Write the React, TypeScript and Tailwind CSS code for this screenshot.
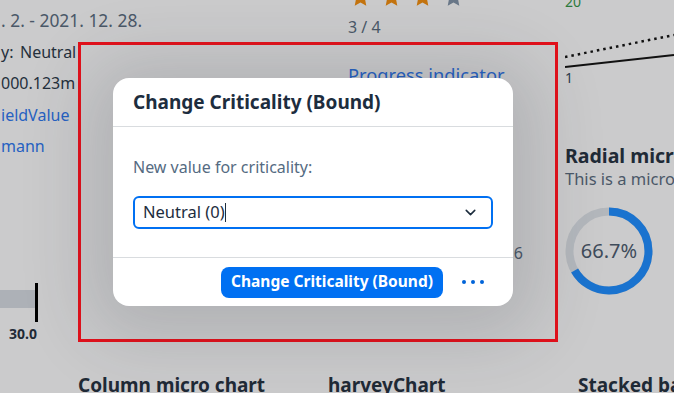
import { ChevronDown } from 'lucide-react'

const FONT = { fontFamily: '"Noto Sans", "Liberation Sans", Arial, sans-serif' }

function Star({ filled }: { filled: boolean }) {
  return (
    <svg width="19" height="18" viewBox="0 0 24 23">
      <path
        d="M12 0l3.6 7.6 8.4 1-6.2 5.8 1.6 8.3L12 18.6l-7.4 4.1 1.6-8.3L0 8.6l8.4-1z"
        fill={filled ? '#c4740f' : '#6a7889'}
      />
    </svg>
  )
}

function Radial({ percent }: { percent: number }) {
  const r = 39.5
  const c = 2 * Math.PI * r
  return (
    <div className="relative w-[88px] h-[88px]">
      <svg width="88" height="88" viewBox="0 0 88 88">
        <circle cx="44" cy="44" r={r} fill="none" stroke="#b3b7bc" strokeWidth="8" />
        <circle
          cx="44"
          cy="44"
          r={r}
          fill="none"
          stroke="#1a73cf"
          strokeWidth="8"
          strokeDasharray={`${(c * percent) / 100} ${c}`}
          transform="rotate(-90 44 44)"
        />
      </svg>
      <div className="absolute inset-0 flex items-center justify-center text-[20px] text-[#3f4c5b]">{percent}%</div>
    </div>
  )
}

function Dialog() {
  return (
    <div className="absolute left-[113px] top-[78px] w-[400px] bg-white rounded-[16px] shadow-[0_8px_70px_24px_rgba(40,45,55,0.16)] overflow-hidden">
      <div className="h-[49px] flex items-center px-5 border-b border-[#d9dcdf]">
        <span className="text-[19px] font-bold text-[#1d2d3e]">Change Criticality (Bound)</span>
      </div>
      <div className="h-[130px] px-5 pt-[30px]">
        <div className="text-[16px] leading-[20px] text-[#556b82]">New value for criticality:</div>
        <div className="mt-[19px] h-[33px] flex items-center border-2 border-[#0070f2] rounded-[6px] pl-[8px] pr-[12px]">
          <span className="text-[16.5px] text-[#1d2d3e]">Neutral (0)</span>
          <span className="w-px h-[19px] bg-[#1d2d3e]" />
          <div className="flex-1" />
          <ChevronDown size={17} strokeWidth={2.2} color="#1d2d3e" />
        </div>
      </div>
      <div className="h-[49px] flex items-center justify-end gap-[12px] pr-[22px] border-t border-[#d9dcdf]">
        <button className="h-[31px] px-[10px] rounded-[8px] bg-[#0070f2] text-white text-[15.5px] font-bold">
          Change Criticality (Bound)
        </button>
        <button className="w-[36px] h-[31px] flex items-center justify-center gap-[5px]">
          <span className="w-[4px] h-[4px] rounded-full bg-[#0064d9]" />
          <span className="w-[4px] h-[4px] rounded-full bg-[#0064d9]" />
          <span className="w-[4px] h-[4px] rounded-full bg-[#0064d9]" />
        </button>
      </div>
    </div>
  )
}

export default function App() {
  return (
    <div style={FONT} className="relative w-[674px] h-[393px] overflow-hidden bg-[#cbcbcc] whitespace-nowrap">
      {/* page behind the dialog */}
      <div className="flex h-[362px]">
        {/* left column */}
        <div className="w-[348px] shrink-0 pl-[1px] pt-[5px] text-[16px] leading-[31.5px]">
          <div className="text-[17.4px] text-[#4a5868]">. 2. - 2021. 12. 28.</div>
          <div className="text-[#25303c]">
            <span className="inline-block w-[19px]">y:</span>Neutral
          </div>
          <div className="text-[#25303c]">000.123m</div>
          <div className="text-[#2661c2]">ieldValue</div>
          <div className="text-[#2661c2]">mann</div>
          <div className="mt-[120px] -ml-[1px] flex items-start">
            <div className="mt-[7px] w-[35px] h-[18px] bg-[#adb1b7]" />
            <div className="w-[3px] h-[39px] bg-black" />
          </div>
          <div className="mt-[4px] w-[40px] pl-[8px] text-[14px] leading-[16px] font-bold text-[#1f2a36]">30.0</div>
        </div>

        {/* middle column */}
        <div className="w-[217px] shrink-0 -mt-[12px]">
          <div className="flex gap-[12px] pl-[3px]">
            <Star filled />
            <Star filled />
            <Star filled />
            <Star filled={false} />
          </div>
          <div className="mt-[9px] text-[16px] leading-[24px] text-[#4a5868]">3 / 4</div>
          <div className="mt-[24px] text-[18.3px] leading-[24px] text-[#2661c2]">Progress indicator</div>
          <div className="mt-[154px] w-[175px] text-right text-[16px] leading-[24px] text-[#4a5868]">45.6</div>
        </div>

        {/* right column */}
        <div className="flex-1 -mt-[8px]">
          <div className="text-[14px] leading-[20px] text-[#2b7a3c]">20</div>
          <svg width="109" height="40" viewBox="0 0 109 40" className="mt-[18px] block">
            <line x1="0" y1="27" x2="109" y2="5" stroke="#111" strokeWidth="2.5" strokeDasharray="2.5 4" />
            <line x1="0" y1="37" x2="109" y2="25" stroke="#111" strokeWidth="2" />
          </svg>
          <div className="text-[14px] leading-[16px] text-[#2c3a4d]">1</div>
          <div className="mt-[58px] text-[19.5px] leading-[24px] font-bold text-[#1f2a36]">Radial micro chart</div>
          <div className="text-[16.5px] leading-[22px] text-[#4a5868]">This is a micro chart</div>
          <div className="mt-[17px]">
            <Radial percent={66.7} />
          </div>
        </div>
      </div>

      {/* next row of cards */}
      <div className="grid grid-cols-[250px_250px_250px] pl-[78px] pt-[11px] text-[19px] leading-[24px] font-bold text-[#1f2a36]">
        <div>Column micro chart</div>
        <div>harveyChart</div>
        <div>Stacked bar micro chart</div>
      </div>

      {/* highlight box */}
      <div className="absolute left-[78px] top-[42px] w-[480px] h-[300px] border-[3px] border-[#e3111b]" />

      <Dialog />
    </div>
  )
}
